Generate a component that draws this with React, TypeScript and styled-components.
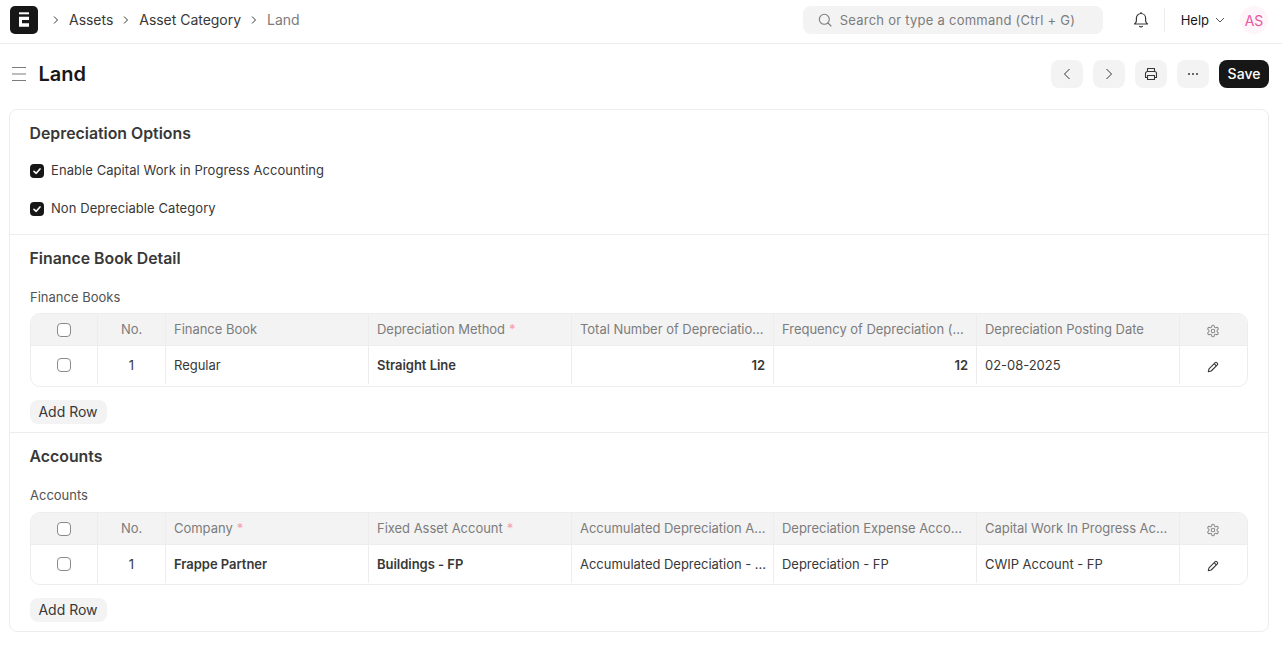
import { createGlobalStyle } from "styled-components";
import styled from "styled-components";
import { Fragment } from "react";
import type { ReactNode } from "react";

const GlobalStyle = createGlobalStyle`
  html, body {
    margin: 0;
    padding: 0;
    background: #fff;
    font-family: Inter, "Liberation Sans", sans-serif;
    color: #383838;
  }
  * { box-sizing: border-box; }
`;

const GRID = "66px 68px 203px 203px 202px 203px 203px 1fr";

const Navbar = styled.header`
  height: 44px;
  border-bottom: 1px solid #ededed;
  display: flex;
  align-items: center;
  padding: 0 14px 3px 10px;
`;

const Logo = styled.div`
  width: 28px;
  height: 28px;
  border-radius: 5px;
  background: #171717;
  display: flex;
`;

const Crumbs = styled.nav`
  display: flex;
  align-items: center;
  margin-left: 14px;
  padding-bottom: 1px;
  font-size: 14px;
  letter-spacing: -0.03px;
  color: #383838;
`;

const Crumb = styled.span<{ $muted?: boolean }>`
  display: flex;
  align-items: center;
  gap: 9px;
  margin-right: 9px;
  color: ${({ $muted }) => ($muted ? "#7c7c7c" : "#383838")};
`;

const SearchBox = styled.div`
  width: 300px;
  height: 28px;
  margin-left: auto;
  border-radius: 8px;
  background: #f3f3f3;
  display: flex;
  align-items: center;
  gap: 7px;
  padding: 0 14px;
  font-size: 13px;
  color: #7c7c7c;
  letter-spacing: 0.25px;
`;

const NavRight = styled.div`
  display: flex;
  align-items: center;
  margin-left: 30px;
`;

const Divider = styled.span`
  width: 1px;
  height: 24px;
  background: #ededed;
  margin: 0 16px 0 15px;
`;

const HelpLink = styled.span`
  display: flex;
  align-items: center;
  gap: 6px;
  font-size: 13px;
  color: #171717;
`;

const Avatar = styled.div`
  width: 28px;
  height: 28px;
  margin-left: 15px;
  border-radius: 50%;
  background: #fdf5fa;
  color: #e8579f;
  font-size: 14px;
  display: flex;
  align-items: center;
  justify-content: center;
`;

const PageHead = styled.div`
  height: 60px;
  display: flex;
  align-items: center;
  padding: 0 13px 0 12px;
`;

const PageTitle = styled.h1`
  margin: 0 0 0 12.5px;
  font-size: 20px;
  font-weight: 600;
  color: #171717;
`;

const Actions = styled.div`
  margin-left: auto;
  display: flex;
  align-items: center;
  gap: 10px;
`;

const IconButton = styled.button`
  width: 32px;
  height: 28px;
  border: 0;
  padding: 0;
  border-radius: 8px;
  background: #f3f3f3;
  display: flex;
  align-items: center;
  justify-content: center;
  color: #525252;
`;

const SaveButton = styled.button`
  width: 50px;
  height: 28px;
  border: 0;
  padding: 0 0 2px;
  border-radius: 8px;
  background: #171717;
  color: #fff;
  font: 500 14px Inter, sans-serif;
`;

const Card = styled.main`
  margin: 5px 13px 0 9px;
  border: 1px solid #ededed;
  border-radius: 8px;
`;

const Section = styled.section<{ $height: number }>`
  height: ${({ $height }) => $height}px;
  padding: 14px 20px 0;
  & + & {
    border-top: 1px solid #ededed;
  }
`;

const SectionTitle = styled.h2`
  margin: 0 0 0 -0.5px;
  font-size: 15.85px;
  line-height: 19px;
  font-weight: 600;
  color: #383838;
`;

const CheckRow = styled.label<{ $top: number }>`
  display: flex;
  align-items: center;
  gap: 7px;
  margin-top: ${({ $top }) => $top}px;
  height: 16px;
  font-size: 13px;
  letter-spacing: 0.07px;
  color: #383838;
`;

const CheckText = styled.span`
  margin-bottom: 2px;
`;

const CheckBox = styled.span<{ $checked?: boolean }>`
  flex: none;
  width: 14px;
  height: 14px;
  border-radius: 4px;
  display: flex;
  align-items: center;
  justify-content: center;
  background: ${({ $checked }) => ($checked ? "#171717" : "#fff")};
  border: ${({ $checked }) => ($checked ? "0" : "1px solid #8a8a8a")};
`;

const FieldLabel = styled.div`
  margin-top: 21px;
  font-size: 13px;
  line-height: 16px;
  color: #525252;
`;

const Table = styled.div<{ $top: number; $foot: number }>`
  margin-top: ${({ $top }) => $top}px;
  padding-bottom: ${({ $foot }) => $foot}px;
  border: 1px solid #ededed;
  border-radius: 10px;
  overflow: hidden;
  font-size: 13px;
  letter-spacing: -0.03px;
`;

const HeadRow = styled.div`
  display: grid;
  grid-template-columns: ${GRID};
  height: 32px;
  background: #f3f3f3;
  border-bottom: 1px solid #ededed;
  color: #7c7c7c;
`;

const BodyRow = styled.div`
  display: grid;
  grid-template-columns: ${GRID};
  height: 38px;
  color: #383838;
`;

const Cell = styled.div`
  display: flex;
  align-items: center;
  padding: 0 7px 0 8px;
  min-width: 0;
  & + & {
    border-left: 1px solid #ededed;
  }
`;

const HeadCell = styled(Cell)`
  padding-bottom: 2px;
`;

const ValueCell = styled(Cell)<{ $right?: boolean; $bold?: boolean }>`
  justify-content: ${({ $right }) => ($right ? "flex-end" : "flex-start")};
  padding-right: ${({ $right }) => ($right ? 8 : 5)}px;
  font-weight: ${({ $bold }) => ($bold ? 600 : 400)};
`;

const CheckCell = styled(Cell)`
  justify-content: center;
  padding: 0 8px;
`;

const NumberCell = styled(Cell)`
  justify-content: center;
  padding: 0 8px;
`;

const HeadNumberCell = styled(NumberCell)`
  padding-bottom: 2px;
`;

const IconCell = styled(Cell)`
  justify-content: center;
  padding: 3px 2px 0 0;
`;

const CellText = styled.span`
  overflow: hidden;
  white-space: nowrap;
  text-overflow: ellipsis;
`;

const Required = styled.span`
  color: #f4a0a0;
  margin-left: 4px;
`;

const AddRow = styled.button`
  display: block;
  margin-top: 13px;
  height: 24px;
  width: 77px;
  border: 0;
  padding: 0 1px 2px 0;
  border-radius: 8px;
  background: #f3f3f3;
  color: #383838;
  font: 400 14px Inter, sans-serif;
`;

const Chevron = () => (
  <svg width="8" height="10" viewBox="0 0 8 10" fill="none" stroke="#383838" strokeWidth="1">
    <path d="M2 1.5 5.5 5 2 8.5" />
  </svg>
);

const Tick = () => (
  <svg width="10" height="10" viewBox="0 0 10 10" fill="none" stroke="#fff" strokeWidth="1.6" strokeLinecap="round" strokeLinejoin="round">
    <path d="M2 5.3 4.2 7.3 8 2.9" />
  </svg>
);

const Gear = () => (
  <svg width="14" height="14" viewBox="0 0 24 24" fill="none" stroke="#8a8a8a" strokeWidth="1.8" strokeLinecap="round" strokeLinejoin="round">
    <path d="M12.22 2h-.44a2 2 0 0 0-2 2v.18a2 2 0 0 1-1 1.73l-.43.25a2 2 0 0 1-2 0l-.15-.08a2 2 0 0 0-2.73.73l-.22.38a2 2 0 0 0 .73 2.73l.15.1a2 2 0 0 1 1 1.72v.51a2 2 0 0 1-1 1.74l-.15.09a2 2 0 0 0-.73 2.73l.22.38a2 2 0 0 0 2.73.73l.15-.08a2 2 0 0 1 2 0l.43.25a2 2 0 0 1 1 1.73V20a2 2 0 0 0 2 2h.44a2 2 0 0 0 2-2v-.18a2 2 0 0 1 1-1.73l.43-.25a2 2 0 0 1 2 0l.15.08a2 2 0 0 0 2.73-.73l.22-.39a2 2 0 0 0-.73-2.73l-.15-.08a2 2 0 0 1-1-1.74v-.5a2 2 0 0 1 1-1.74l.15-.09a2 2 0 0 0 .73-2.73l-.22-.38a2 2 0 0 0-2.73-.73l-.15.08a2 2 0 0 1-2 0l-.43-.25a2 2 0 0 1-1-1.73V4a2 2 0 0 0-2-2z" />
    <circle cx="12" cy="12" r="3" />
  </svg>
);

const Pencil = () => (
  <svg width="12" height="12" viewBox="0 0 12 12" fill="none" stroke="#383838" strokeWidth="1.1" strokeLinejoin="round">
    <path d="M1.3 10.7 2 7.8 8.2 1.6a1 1 0 0 1 1.4 0l.8.8a1 1 0 0 1 0 1.4L4.2 10z" />
    <path d="M7.2 2.7 9.3 4.8" />
  </svg>
);

type Column = { label: string; required?: boolean };
type Value = { text: string; bold?: boolean; right?: boolean };

type ChildTableProps = {
  columns: Column[];
  values: Value[];
  top: number;
  foot: number;
};

const ChildTable = ({ columns, values, top, foot }: ChildTableProps) => (
  <Table $top={top} $foot={foot}>
    <HeadRow>
      <CheckCell>
        <CheckBox />
      </CheckCell>
      <HeadNumberCell>No.</HeadNumberCell>
      {columns.map((c) => (
        <HeadCell key={c.label}>
          <CellText>
            {c.label}
            {c.required && <Required>*</Required>}
          </CellText>
        </HeadCell>
      ))}
      <IconCell>
        <Gear />
      </IconCell>
    </HeadRow>
    <BodyRow>
      <CheckCell>
        <CheckBox />
      </CheckCell>
      <NumberCell>1</NumberCell>
      {values.map((v, i) => (
        <ValueCell key={i} $bold={v.bold} $right={v.right}>
          <CellText>{v.text}</CellText>
        </ValueCell>
      ))}
      <IconCell>
        <Pencil />
      </IconCell>
    </BodyRow>
  </Table>
);

const crumbs: ReactNode[] = ["Assets", "Asset Category"];

export default function App() {
  return (
    <Fragment>
      <GlobalStyle />
      <Navbar>
        <Logo>
          <svg width="28" height="28" viewBox="0 0 28 28" fill="#fff">
            <path d="M9 6.3h10v2H9z" />
            <path fillRule="evenodd" d="M9 10.7h10v10H9zM12 14v3.3h7V14z" />
          </svg>
        </Logo>
        <Crumbs>
          {crumbs.map((c, i) => (
            <Crumb key={i}>
              <Chevron />
              {c}
            </Crumb>
          ))}
          <Crumb $muted>
            <Chevron />
            Land
          </Crumb>
        </Crumbs>
        <SearchBox>
          <svg width="16" height="16" viewBox="0 0 16 16" fill="none" stroke="#7c7c7c" strokeWidth="1.1" strokeLinecap="round">
            <circle cx="7.3" cy="7.3" r="5" />
            <path d="M11 11l3 3" />
          </svg>
          Search or type a command (Ctrl + G)
        </SearchBox>
        <NavRight>
          <svg width="16" height="18" viewBox="0 0 16 18" fill="none" stroke="#383838" strokeWidth="1.2" strokeLinejoin="round" strokeLinecap="round">
            <path d="M8 1.5v1" />
            <path d="M8 2.5a4.6 4.6 0 0 0-4.6 4.6v2.6c0 1.4-1 2.5-1.9 3.3h13c-.9-.8-1.9-1.9-1.9-3.3V7.1A4.6 4.6 0 0 0 8 2.5z" />
            <path d="M6.6 15.3c.7.8 2.1.8 2.8 0" />
          </svg>
          <Divider />
          <HelpLink>
            Help
            <svg width="10" height="6" viewBox="0 0 10 6" fill="none" stroke="#525252" strokeWidth="1">
              <path d="M1 1l4 4 4-4" />
            </svg>
          </HelpLink>
          <Avatar>AS</Avatar>
        </NavRight>
      </Navbar>
      <PageHead>
        <svg width="14" height="16" viewBox="0 0 14 16" fill="none" stroke="#7c7c7c" strokeWidth="1.2">
          <path d="M0 1.5h14M0 8h14M0 14.5h14" />
        </svg>
        <PageTitle>Land</PageTitle>
        <Actions>
          <IconButton aria-label="Previous">
            <svg width="8" height="12" viewBox="0 0 8 12" fill="none" stroke="#383838" strokeWidth="1">
              <path d="M6.5 1 1.5 6l5 5" />
            </svg>
          </IconButton>
          <IconButton aria-label="Next">
            <svg width="8" height="12" viewBox="0 0 8 12" fill="none" stroke="#383838" strokeWidth="1">
              <path d="M1.5 1l5 5-5 5" />
            </svg>
          </IconButton>
          <IconButton aria-label="Print">
            <svg width="14" height="14" viewBox="0 0 14 14" fill="none" stroke="#383838" strokeWidth="1.1" strokeLinejoin="round">
              <path d="M3.5 4.5V1.5h7v3" />
              <path d="M3.5 10.5h-2v-4a2 2 0 0 1 2-2h7a2 2 0 0 1 2 2v4h-2" />
              <path d="M3.5 8.5h7v4h-7z" />
            </svg>
          </IconButton>
          <IconButton aria-label="Menu">
            <svg width="12" height="4" viewBox="0 0 12 4" fill="#383838">
              <circle cx="2" cy="2" r="1" />
              <circle cx="6" cy="2" r="1" />
              <circle cx="10" cy="2" r="1" />
            </svg>
          </IconButton>
          <SaveButton>Save</SaveButton>
        </Actions>
      </PageHead>
      <Card>
        <Section $height={124}>
          <SectionTitle>Depreciation Options</SectionTitle>
          <CheckRow $top={20}>
            <CheckBox $checked>
              <Tick />
            </CheckBox>
            <CheckText>Enable Capital Work in Progress Accounting</CheckText>
          </CheckRow>
          <CheckRow $top={22}>
            <CheckBox $checked>
              <Tick />
            </CheckBox>
            <CheckText>Non Depreciable Category</CheckText>
          </CheckRow>
        </Section>
        <Section $height={198}>
          <SectionTitle>Finance Book Detail</SectionTitle>
          <FieldLabel>Finance Books</FieldLabel>
          <ChildTable
            top={8}
            foot={2}
            columns={[
              { label: "Finance Book" },
              { label: "Depreciation Method", required: true },
              { label: "Total Number of Depreciations" },
              { label: "Frequency of Depreciation (Months)" },
              { label: "Depreciation Posting Date" },
            ]}
            values={[
              { text: "Regular" },
              { text: "Straight Line", bold: true },
              { text: "12", bold: true, right: true },
              { text: "12", bold: true, right: true },
              { text: "02-08-2025" },
            ]}
          />
          <AddRow>Add Row</AddRow>
        </Section>
        <Section $height={199}>
          <SectionTitle>Accounts</SectionTitle>
          <FieldLabel>Accounts</FieldLabel>
          <ChildTable
            top={9}
            foot={1}
            columns={[
              { label: "Company", required: true },
              { label: "Fixed Asset Account", required: true },
              { label: "Accumulated Depreciation Account" },
              { label: "Depreciation Expense Account" },
              { label: "Capital Work In Progress Account" },
            ]}
            values={[
              { text: "Frappe Partner", bold: true },
              { text: "Buildings - FP", bold: true },
              { text: "Accumulated Depreciation - FP" },
              { text: "Depreciation - FP" },
              { text: "CWIP Account - FP" },
            ]}
          />
          <AddRow>Add Row</AddRow>
        </Section>
      </Card>
    </Fragment>
  );
}
